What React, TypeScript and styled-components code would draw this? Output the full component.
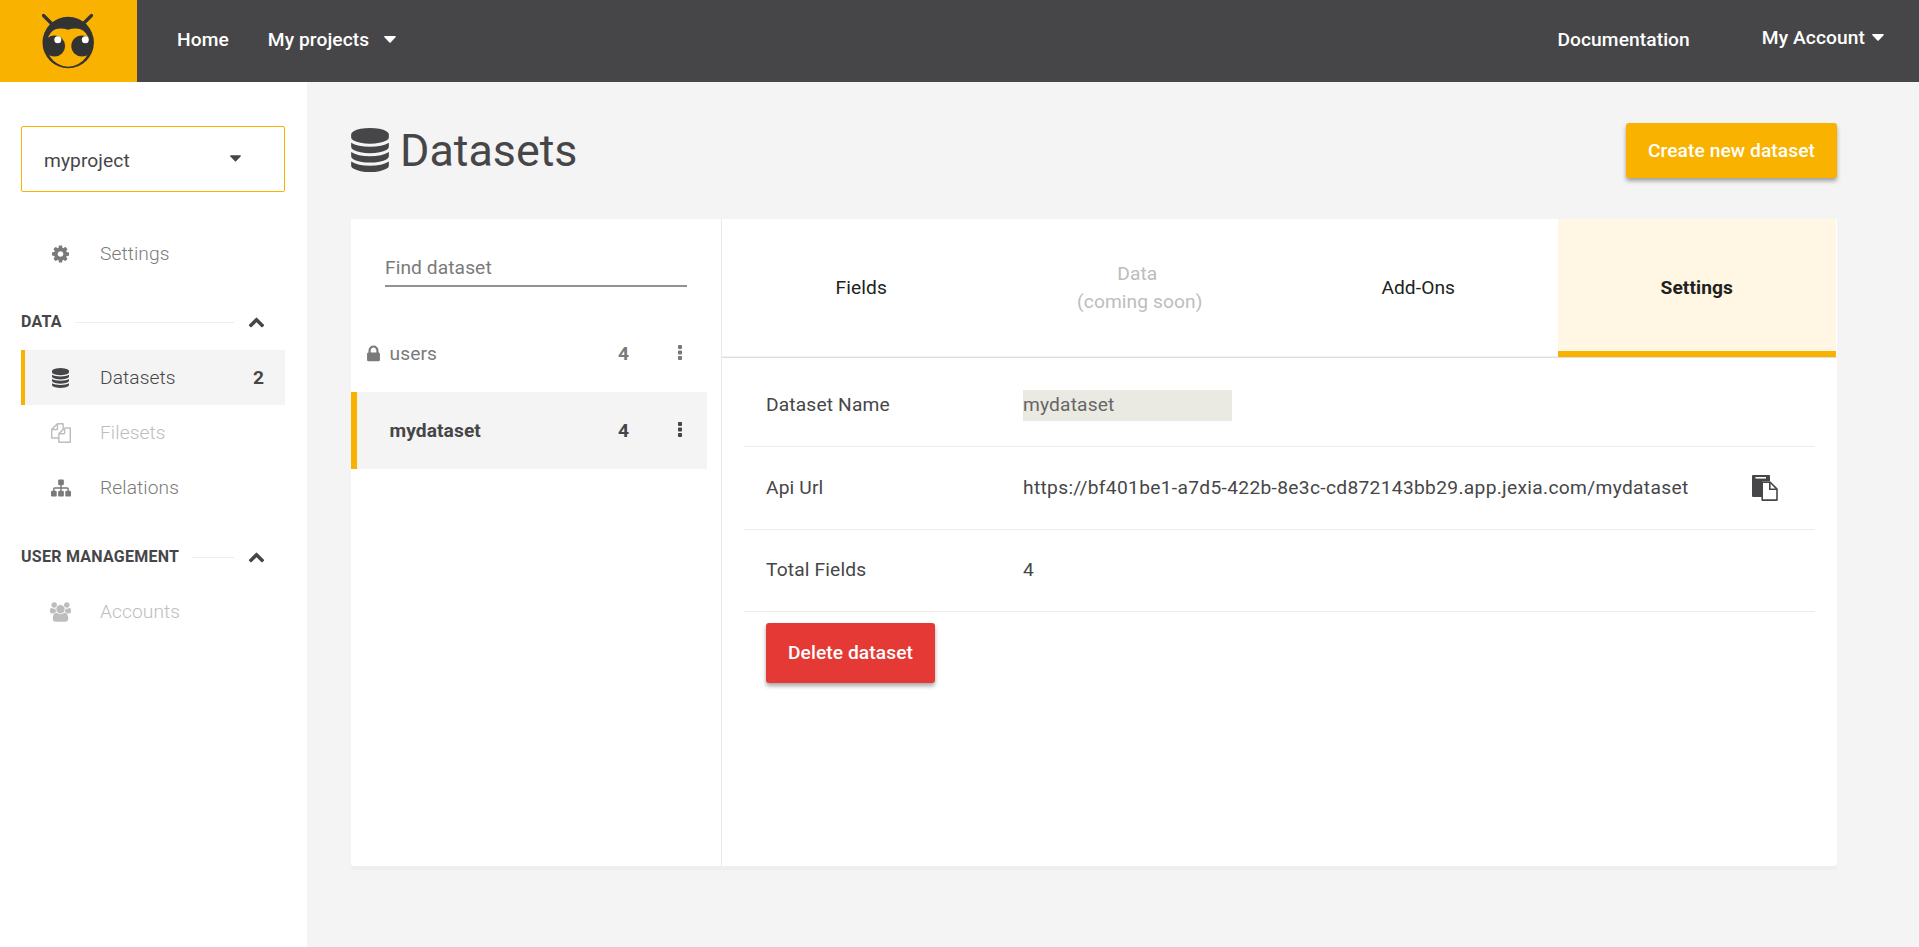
import React from 'react';
import styled, { createGlobalStyle, css } from 'styled-components';

const yellow = '#f9b200';
const dark = '#464648';
const grey = '#7a7a7a';
const faint = '#bdbdbd';
const pale = '#f4f4f4';

const GlobalStyle = createGlobalStyle`
  *, *::before, *::after { box-sizing: border-box; }
  html, body { margin: 0; padding: 0; }
  body {
    background: ${pale};
    color: ${dark};
    font-family: Roboto, "Liberation Sans", sans-serif;
    font-size: 19.2px;
    letter-spacing: 0.08px;
    overflow: hidden;
  }
  button, input { font: inherit; letter-spacing: inherit; }
`;

const glyphs = {
  database: {
    box: '0 0 1536 1792',
    d: 'M768 768q237 0 443-43t325-127v170q0 69-103 128t-280 93.5-385 34.5-385-34.5-280-93.5-103-128v-170q119 84 325 127t443 43zm0 768q237 0 443-43t325-127v170q0 69-103 128t-280 93.5-385 34.5-385-34.5-280-93.5-103-128v-170q119 84 325 127t443 43zm0-384q237 0 443-43t325-127v170q0 69-103 128t-280 93.5-385 34.5-385-34.5-280-93.5-103-128v-170q119 84 325 127t443 43zm0-1152q208 0 385 34.5t280 93.5 103 128v128q0 69-103 128t-280 93.5-385 34.5-385-34.5-280-93.5-103-128v-128q0-69 103-128t280-93.5 385-34.5z',
  },
  files: {
    box: '0 0 1792 1792',
    d: 'M1696 384q40 0 68 28t28 68v1216q0 40-28 68t-68 28h-960q-40 0-68-28t-28-68v-288h-544q-40 0-68-28t-28-68v-672q0-40 20-88t48-76l408-408q28-28 76-48t88-20h416q40 0 68 28t28 68v328q68-40 128-40h416zm-544 213l-299 299h299v-299zm-640-384l-299 299h299v-299zm196 647l316-316v-416h-384v416q0 40-28 68t-68 28h-416v640h512v-256q0-40 20-88t48-76zm956 804v-1152h-384v416q0 40-28 68t-68 28h-416v640h896z',
  },
  sitemap: {
    box: '0 0 1792 1792',
    d: 'M1792 1248v320q0 40-28 68t-68 28h-320q-40 0-68-28t-28-68v-320q0-40 28-68t68-28h96v-192h-512v192h96q40 0 68 28t28 68v320q0 40-28 68t-68 28h-320q-40 0-68-28t-28-68v-320q0-40 28-68t68-28h96v-192h-512v192h96q40 0 68 28t28 68v320q0 40-28 68t-68 28h-320q-40 0-68-28t-28-68v-320q0-40 28-68t68-28h96v-192q0-52 38-90t90-38h512v-192h-96q-40 0-68-28t-28-68v-320q0-40 28-68t68-28h320q40 0 68 28t28 68v320q0 40-28 68t-68 28h-96v192h512q52 0 90 38t38 90v192h96q40 0 68 28t28 68z',
  },
  cog: {
    box: '128 0 1536 1792',
    d: 'M1152 896q0-106-75-181t-181-75-181 75-75 181 75 181 181 75 181-75 75-181zm512-109v222q0 12-8 23t-20 13l-185 28q-19 54-39 91 35 50 107 138 10 12 10 25t-9 23q-27 37-99 108t-94 71q-12 0-26-9l-138-108q-44 23-91 38-16 136-29 186-7 28-36 28h-222q-14 0-24.5-8.5t-11.5-21.5l-28-184q-49-16-90-37l-141 107q-10 9-25 9-14 0-25-11-126-114-165-168-7-10-7-23 0-12 8-23 15-21 51-66.5t54-70.5q-27-50-41-99l-183-27q-13-2-21-12.5t-8-23.5v-222q0-12 8-23t19-13l186-28q14-46 39-92-40-57-107-138-10-12-10-24 0-10 9-23 26-36 98.5-107.5t94.5-71.5q13 0 26 10l138 107q44-23 91-38 16-136 29-186 7-28 36-28h222q14 0 24.5 8.5t11.5 21.5l28 184q49 16 90 37l142-107q9-9 24-9 13 0 25 10 129 119 165 170 7 8 7 22 0 12-8 23-15 21-51 66.5t-54 70.5q26 50 41 98l183 28q13 2 21 12.5t8 23.5z',
  },
  lock: {
    box: '320 0 1152 1792',
    d: 'M640 768h512v-192q0-106-75-181t-181-75-181 75-75 181v192zm832 96v576q0 40-28 68t-68 28h-960q-40 0-68-28t-28-68v-576q0-40 28-68t68-28h32v-192q0-184 132-316t316-132 316 132 132 316v192h32q40 0 68 28t28 68z',
  },
  chevronUp: {
    box: '0 0 1792 1792',
    d: 'M1683 1331l-166 165q-19 19-45 19t-45-19l-531-531-531 531q-19 19-45 19t-45-19l-166-165q-19-19-19-45.500t19-45.500l742-741q19-19 45-19t45 19l742 741q19 19 19 45.500t-19 45.500z',
  },
  users: {
    box: '64 0 1920 1792',
    d: 'M657 896q-162 5-265 128h-134q-82 0-138-40.500t-56-118.500q0-353 124-353 6 0 43.500 21t97.500 42.500 119 21.500q67 0 133-23-5 37-5 66 0 139 81 256zm1071 637q0 120-73 189.500t-194 69.500h-874q-121 0-194-69.500t-73-189.500q0-53 3.500-103.500t14-109 26.500-108.500 43-97.500 62-81 85.500-53.500 111.500-20q10 0 43 21.500t73 48 107 48 135 21.500 135-21.500 107-48 73-48 43-21.500q61 0 111.500 20t85.500 53.500 62 81 43 97.500 26.500 108.500 14 109 3.500 103.500zm-1024-1277q0 106-75 181t-181 75-181-75-75-181 75-181 181-75 181 75 75 181zm704 384q0 159-112.500 271.500t-271.500 112.500-271.500-112.500-112.500-271.500 112.500-271.500 271.500-112.500 271.500 112.500 112.500 271.500zm576 225q0 78-56 118.500t-138 40.500h-134q-103-123-265-128 81-117 81-256 0-29-5-66 66 23 133 23 59 0 119-21.500t97.500-42.500 43.500-21q124 0 124 353zm-128-609q0 106-75 181t-181 75-181-75-75-181 75-181 181-75 181 75 75 181z',
  },
  caret: { box: '0 0 12 7', d: 'M1 0h10q.9 0 .9.6 0 .3-.3.6l-5 5.200q-.6.6-1.200 0l-5-5.200q-.3-.3-.3-.6 0-.6.9-.6z' },
  dots: {
    box: '0 0 4 15',
    d: 'M.8 0h2.400q.8 0 .8.800v2.400q0 .8-.8.8h-2.400q-.8 0-.8-.8v-2.400q0-.8.8-.8zm0 5.500h2.400q.8 0 .8.800v2.400q0 .8-.8.8h-2.400q-.8 0-.8-.8v-2.400q0-.8.8-.8zm0 5.500h2.400q.8 0 .8.800v2.400q0 .8-.8.8h-2.400q-.8 0-.8-.8v-2.400q0-.8.8-.8z',
  },
};

type GlyphName = keyof typeof glyphs;

const GlyphSvg = styled.svg`
  display: block;
  flex: none;
  fill: currentColor;
`;

const Glyph = ({ name, w, h }: { name: GlyphName; w: number; h: number }) => (
  <GlyphSvg width={w} height={h} viewBox={glyphs[name].box}>
    <path d={glyphs[name].d} />
  </GlyphSvg>
);

const Header = styled.header`
  display: flex;
  height: 82px;
  background: ${dark};
  color: #fff;
  font-weight: 500;
`;

const LogoCell = styled.a`
  width: 137px;
  background: ${yellow};
  padding: 8px 0 0 36px;
  svg { display: block; }
`;

const HeaderNav = styled.nav`
  display: flex;
  flex: 1;
  padding: 0 35px 0 40px;
`;

const HeaderLink = styled.a<{ $lift?: number; $gap?: number; $ml?: number }>`
  display: flex;
  align-items: center;
  height: ${p => 78 - (p.$lift ?? 0)}px;
  gap: ${p => p.$gap ?? 0}px;
  margin-left: ${p => p.$ml ?? 0}px;
  white-space: nowrap;
`;

const Spacer = styled.div`
  flex: 1;
`;

const Body = styled.div`
  display: flex;
  height: 865px;
`;

const Sidebar = styled.aside`
  width: 307px;
  background: #fff;
  padding: 44px 22px 0 21px;
`;

const ProjectSelect = styled.div`
  display: flex;
  align-items: center;
  justify-content: space-between;
  height: 66px;
  margin-bottom: 34px;
  padding: 2px 43px 0 22px;
  border: 1px solid ${yellow};
  border-radius: 2px;
  svg { margin-top: -4px; }
`;

const NavItem = styled.a<{ $state?: 'active' | 'disabled' }>`
  display: flex;
  align-items: center;
  height: 55px;
  padding-right: 21px;
  border-left: 4px solid transparent;
  color: ${grey};
  ${p => p.$state === 'active' && css`
    color: ${dark};
    background: ${pale};
    border-left-color: ${yellow};
  `}
  ${p => p.$state === 'disabled' && css`color: ${faint};`}
`;

const NavIcon = styled.span`
  display: flex;
  justify-content: center;
  width: 71px;
`;

const NavLabel = styled.span`
  flex: 1;
  margin-left: 4px;
  font-weight: 300;
`;

const NavCount = styled.b`
  font-weight: 700;
`;

const SectionHead = styled.div<{ $drop?: number }>`
  display: flex;
  align-items: center;
  height: 69px;
  padding: ${p => 12 + (p.$drop ?? 0)}px 20px 0 0;
  font-size: 16px;
  font-weight: 700;
  letter-spacing: 0.25px;
`;

const Rule = styled.span`
  flex: 1;
  height: 1px;
  margin: 2px 14px 0 13px;
  background: #eee;
`;

const Main = styled.main`
  flex: 1;
  padding: 41px 82px 0 44px;
`;

const TitleBar = styled.div`
  display: flex;
  align-items: flex-start;
  justify-content: space-between;
  height: 96px;
`;

const Title = styled.h1`
  display: flex;
  align-items: center;
  gap: 11px;
  margin: 0;
  height: 55px;
  font-size: 44.8px;
  font-weight: 400;
  letter-spacing: 0;
  svg { margin-top: -1px; }
`;

const Button = styled.button<{ $bg: string; $h: number }>`
  height: ${p => p.$h}px;
  padding: 0 22px 1px;
  border: 0;
  border-radius: 3px;
  background: ${p => p.$bg};
  color: #fff;
  font-weight: 500;
  box-shadow: 0 3px 4px rgba(0, 0, 0, 0.35);
`;

const Card = styled.section`
  display: flex;
  height: 647px;
  background: #fff;
  border-radius: 0 0 3px 3px;
  box-shadow: 0 4px 0 #eee;
`;

const ListPane = styled.div`
  width: 371px;
  border-right: 1px solid #e9e9e9;
`;

const Search = styled.input`
  display: block;
  width: 302px;
  height: 38px;
  margin: 30px 0 28px 34px;
  padding: 0;
  border: 0;
  border-bottom: 2px solid #919191;
  background: transparent;
  outline: 0;
  &::placeholder { color: ${grey}; opacity: 1; }
`;

const ListItem = styled.div<{ $active?: boolean }>`
  display: flex;
  align-items: center;
  width: 356px;
  height: 77px;
  padding: 0 25px 0 10px;
  border-left: 6px solid ${p => (p.$active ? yellow : 'transparent')};
  background: ${p => (p.$active ? pale : 'transparent')};
  color: ${p => (p.$active ? dark : grey)};
  font-weight: ${p => (p.$active ? 700 : 400)};
`;

const LockSlot = styled.span`
  display: flex;
  width: 22.5px;
`;

const ListName = styled.span`
  flex: 1;
`;

const ListCount = styled.b`
  width: 60px;
  font-weight: 700;
`;

const MenuHandle = styled.span`
  padding-bottom: 3px;
`;

const Detail = styled.div`
  flex: 1;
`;

const Tabs = styled.div`
  display: grid;
  grid-template-columns: repeat(4, 1fr);
  height: 139px;
  padding-right: 1px;
  border-bottom: 1px solid #dedede;
`;

const Tab = styled.div<{ $state?: 'active' | 'disabled' }>`
  display: flex;
  align-items: center;
  justify-content: center;
  text-align: center;
  line-height: 28px;
  color: #212121;
  border-bottom: 1px solid #f2f2f2;
  ${p => p.$state === 'disabled' && css`color: ${faint};`}
  ${p => p.$state === 'active' && css`
    padding-top: 5px;
    font-weight: 700;
    background: #fff6e3;
    border-bottom: 6px solid ${yellow};
  `}
`;

const Rows = styled.div`
  padding: 7px 22px 0;
`;

const Row = styled.div`
  display: flex;
  align-items: center;
  height: 82.400px;
  padding: 0 37px 0 22px;
  border-bottom: 1px solid #ececec;
  letter-spacing: 0.15px;
`;

const Label = styled.span`
  width: 257px;
  padding-bottom: 2px;
`;

const Value = styled.span`
  flex: 1;
  padding-bottom: 2px;
  letter-spacing: 0.32px;
`;

const NameField = styled.span`
  width: 209px;
  height: 31px;
  line-height: 29px;
  background: #eaeae2;
  color: #666;
`;

const Actions = styled.div`
  padding: 11px 22px;
`;

const BeeLogo = () => (
  <svg width="64" height="64" viewBox="0 0 64 64">
    <path d="M7.500 7.500L17 17M55.500 7.500L46 17" stroke="#333" strokeWidth="3.200" strokeLinecap="round" />
    <circle cx="32.200" cy="34.500" r="25.700" fill="#333" />
    <path d="M12.200 28.900Q16 20.500 24 20.500Q28 20.400 32.200 21.800Q36 20.400 40 20.500Q48 20.500 52.200 28.900A21.600 21.600 0 1 1 12.200 28.900Z" fill={yellow} />
    <circle cx="18.500" cy="38" r="10.600" fill="#333" />
    <circle cx="45.900" cy="38" r="10.600" fill="#333" />
    <circle cx="21.800" cy="31.800" r="3.500" fill="#fff" />
    <circle cx="49.300" cy="31.800" r="3.500" fill="#fff" />
  </svg>
);

const PasteIcon = () => (
  <svg width="26" height="26" viewBox="0 0 26 26">
    <path d="M1 0h16q1 0 1 1v5.500h-8v15.500h-9q-1 0-1-1v-20q0-1 1-1z" fill={dark} />
    <path d="M3.500 2h10.500v1.600h-10.500z" fill="#fff" />
    <path d="M10.200 7.300h8l6.800 6.800v11h-14.800z" fill="#fff" stroke={dark} strokeWidth="1.600" strokeLinejoin="round" />
    <path d="M17.800 7.300v7h7" fill="none" stroke={dark} strokeWidth="1.600" />
  </svg>
);

export default function App() {
  return (
    <>
      <GlobalStyle />
      <Header>
        <LogoCell><BeeLogo /></LogoCell>
        <HeaderNav>
          <HeaderLink>Home</HeaderLink>
          <HeaderLink $ml={39} $gap={15}>My projects <Glyph name="caret" w={12} h={7} /></HeaderLink>
          <Spacer />
          <HeaderLink>Documentation</HeaderLink>
          <HeaderLink $ml={72} $gap={7} $lift={4}>My Account <Glyph name="caret" w={12} h={7} /></HeaderLink>
        </HeaderNav>
      </Header>
      <Body>
        <Sidebar>
          <ProjectSelect>myproject <Glyph name="caret" w={11} h={7} /></ProjectSelect>
          <NavItem><NavIcon><Glyph name="cog" w={17} h={20} /></NavIcon><NavLabel>Settings</NavLabel></NavItem>
          <SectionHead>DATA<Rule /><Glyph name="chevronUp" w={17} h={17} /></SectionHead>
          <NavItem $state="active">
            <NavIcon><Glyph name="database" w={17} h={20} /></NavIcon><NavLabel>Datasets</NavLabel><NavCount>2</NavCount>
          </NavItem>
          <NavItem $state="disabled"><NavIcon><Glyph name="files" w={20} h={20} /></NavIcon><NavLabel>Filesets</NavLabel></NavItem>
          <NavItem><NavIcon><Glyph name="sitemap" w={20} h={20} /></NavIcon><NavLabel>Relations</NavLabel></NavItem>
          <SectionHead $drop={2}>USER MANAGEMENT<Rule /><Glyph name="chevronUp" w={17} h={17} /></SectionHead>
          <NavItem $state="disabled"><NavIcon><Glyph name="users" w={21} h={20} /></NavIcon><NavLabel>Accounts</NavLabel></NavItem>
        </Sidebar>
        <Main>
          <TitleBar>
            <Title><Glyph name="database" w={38} h={44} />Datasets</Title>
            <Button $bg={yellow} $h={55}>Create new dataset</Button>
          </TitleBar>
          <Card>
            <ListPane>
              <Search placeholder="Find dataset" />
              <ListItem>
                <LockSlot><Glyph name="lock" w={13} h={20} /></LockSlot>
                <ListName>users</ListName><ListCount>4</ListCount>
                <MenuHandle><Glyph name="dots" w={4} h={15} /></MenuHandle>
              </ListItem>
              <ListItem $active>
                <LockSlot />
                <ListName>mydataset</ListName><ListCount>4</ListCount>
                <MenuHandle><Glyph name="dots" w={4} h={15} /></MenuHandle>
              </ListItem>
            </ListPane>
            <Detail>
              <Tabs>
                <Tab>Fields</Tab>
                <Tab $state="disabled">Data&nbsp;<br />(coming soon)</Tab>
                <Tab>Add-Ons</Tab>
                <Tab $state="active">Settings</Tab>
              </Tabs>
              <Rows>
                <Row><Label>Dataset Name</Label><NameField>mydataset</NameField></Row>
                <Row>
                  <Label>Api Url</Label>
                  <Value>https://bf401be1-a7d5-422b-8e3c-cd872143bb29.app.jexia.com/mydataset</Value>
                  <PasteIcon />
                </Row>
                <Row><Label>Total Fields</Label><Value>4</Value></Row>
                <Actions><Button $bg="#e53935" $h={60}>Delete dataset</Button></Actions>
              </Rows>
            </Detail>
          </Card>
        </Main>
      </Body>
    </>
  );
}
